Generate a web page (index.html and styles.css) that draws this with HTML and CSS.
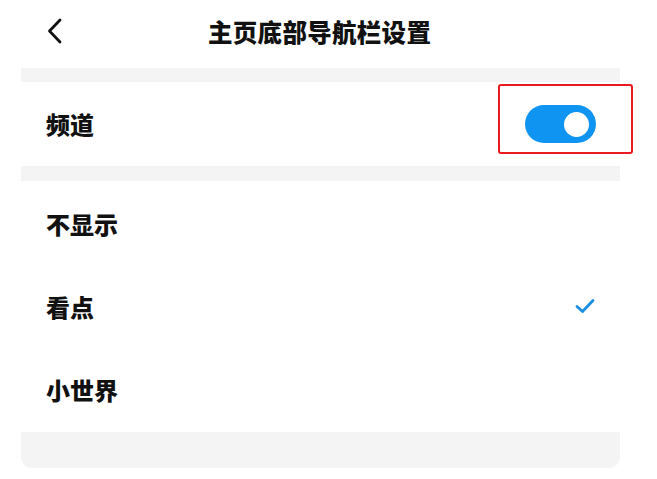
FILE: index.html
```html
<!DOCTYPE html>
<html lang="zh-CN">
<head>
<meta charset="utf-8">
<title>主页底部导航栏设置</title>
<link rel="stylesheet" href="styles.css">
</head>
<body>
<header class="topbar">
  <svg class="back" width="15" height="26" viewBox="0 0 15 26"><polyline points="13,2 2.5,13 13,24" fill="none" stroke="#111" stroke-width="2.8" stroke-linecap="round" stroke-linejoin="round"/></svg>
  <h1 class="title">主页底部导航栏设置</h1>
</header>
<main class="card">
  <div class="band band-top"></div>
  <div class="row">
    <span class="label">频道</span>
    <div class="toggle-wrap">
      <div class="toggle"><span class="knob"></span></div>
      <div class="highlight"></div>
    </div>
  </div>
  <div class="band band-mid"></div>
  <ul class="list">
    <li class="item"><span class="label">不显示</span></li>
    <li class="item"><span class="label">看点</span>
      <svg class="check" width="20" height="16" viewBox="0 0 20 16"><polyline points="2,8.5 7.5,13.5 18,2.5" fill="none" stroke="#1a8fe3" stroke-width="2.8" stroke-linecap="round" stroke-linejoin="round"/></svg>
    </li>
    <li class="item"><span class="label">小世界</span></li>
  </ul>
  <div class="band band-bottom"></div>
</main>
</body>
</html>
```
FILE: styles.css
```css
html, body {
  margin: 0;
  padding: 0;
  background: #ffffff;
}
body {
  width: 657px;
  font-family: "Noto Sans CJK SC", "Noto Sans", sans-serif;
  color: #111111;
}
.topbar {
  height: 68px;
  display: flex;
  align-items: center;
  padding-left: 47px;
  box-sizing: border-box;
}
.back {
  display: block;
  margin-top: -6px;
}
.title {
  margin: 0 0 0 146px;
  font-size: 24.5px;
  font-weight: 900;
  line-height: 1;
  letter-spacing: 0.3px;
  margin-top: -4px;
}
.card {
  margin-left: 21px;
  width: 599px;
  background: #ffffff;
}
.band {
  background: #f4f4f4;
}
.band-top { height: 14px; }
.band-mid { height: 15px; }
.band-bottom {
  height: 36px;
  border-radius: 0 0 11px 11px;
}
.row {
  height: 84px;
  display: flex;
  align-items: center;
  justify-content: space-between;
  padding: 0 24px 0 25px;
}
.label {
  font-size: 24px;
  font-weight: 900;
  line-height: 1;
}
.toggle-wrap {
  position: relative;
}
.toggle {
  width: 71px;
  height: 38px;
  border-radius: 19px;
  background: #0f95f1;
  display: flex;
  align-items: center;
  justify-content: flex-end;
  padding-right: 7px;
  box-sizing: border-box;
}
.knob {
  width: 25px;
  height: 25px;
  border-radius: 50%;
  background: #ffffff;
}
.highlight {
  position: absolute;
  left: -27px;
  right: -37px;
  top: -21px;
  bottom: -11px;
  border: 2.5px solid #ea1a1f;
  border-radius: 3px;
}
.list {
  list-style: none;
  margin: 0;
  padding: 1px 0;
}
.item {
  height: 83px;
  display: flex;
  align-items: center;
  justify-content: space-between;
  padding: 0 25px 0 25px;
}
.check {
  display: block;
  margin-top: -2px;
}
```
